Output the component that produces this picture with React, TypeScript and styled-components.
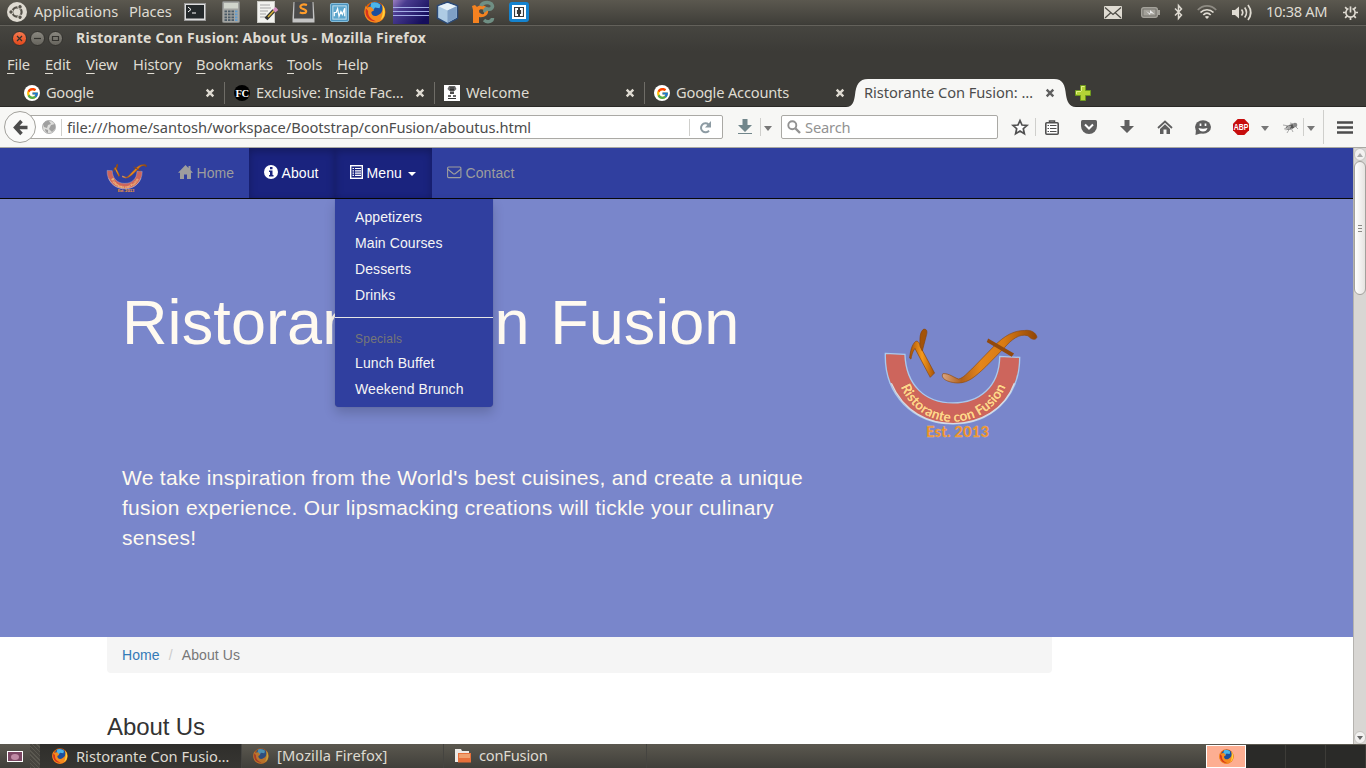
import React from "react";
import styled, { createGlobalStyle, css } from "styled-components";
import { FcGoogle } from "react-icons/fc";

const UI = `"Noto Sans", "Open Sans", sans-serif`;
const WEB = `"Liberation Sans", Arial, sans-serif`;

const Global = createGlobalStyle`
  * { box-sizing: border-box; }
  html, body { margin: 0; padding: 0; overflow: hidden; }
  svg { display: block; flex: none; overflow: visible; }
`;

const Screen = styled.div`
  width: 1366px;
  height: 768px;
  display: flex;
  flex-direction: column;
  overflow: hidden;
  background: #3c3b37;
  font-family: ${UI};
  font-size: 14.67px;
  color: #dfdbd2;
`;

const Label = styled.span<{ $ls?: number; $w?: number; $muted?: boolean }>`
  white-space: pre;
  flex: none;
  padding-bottom: 2px;
  letter-spacing: ${(p) => p.$ls ?? 0}px;
  ${(p) => p.$w && css`width: ${p.$w}px;`}
  ${(p) => p.$muted && css`color: #929292;`}
`;

const Slot = styled.div<{ $w: number }>`
  width: ${(p) => p.$w}px;
  flex: none;
  display: flex;
  align-items: center;
  justify-content: center;
`;

const Spacer = styled.div`
  flex: 1;
`;

/* ---------- desktop panel ---------- */
const Panel = styled.div`
  height: 26px;
  flex: none;
  display: flex;
  align-items: center;
  padding-bottom: 2px;
  background: linear-gradient(#5b584f, #3f3e39 24px, #3a3935 25px, #63615b 25px);
`;

/* ---------- window chrome ---------- */
const TitleBar = styled.div`
  height: 25px;
  flex: none;
  display: flex;
  align-items: center;
  padding-left: 12px;
  gap: 3px;
  background: linear-gradient(#464540, #3c3b37);
  font-weight: bold;
`;

const Title = styled.span`
  margin-left: 10px;
  padding-bottom: 2px;
  white-space: pre;
  font-size: 14px;
  letter-spacing: 0.255px;
`;

const WindowButton = styled.div<{ $close?: boolean }>`
  width: 15px;
  height: 15px;
  border-radius: 50%;
  border: 1px solid #33322e;
  background: ${(p) => (p.$close ? "linear-gradient(#f6794f,#e2481b)" : "linear-gradient(#8a8880,#66645d)")};
`;

const MenuBar = styled.div`
  height: 28px;
  flex: none;
  display: flex;
  align-items: center;
  padding-left: 7px;
  u {
    text-underline-offset: 3px;
    text-decoration-thickness: 1px;
    text-decoration-skip-ink: none;
  }
`;

const TabStrip = styled.div`
  height: 28px;
  flex: none;
  display: flex;
  padding-left: 14px;
  border-bottom: 1px solid #2a2926;
`;

const Tab = styled.div<{ $last?: boolean }>`
  width: 210px;
  flex: none;
  height: 28px;
  display: flex;
  align-items: center;
  padding-left: 10px;
  gap: 6px;
  &::after {
    content: "";
    flex: none;
    width: 1px;
    height: 22px;
    margin-left: 4px;
    background: ${(p) => (p.$last ? "transparent" : "#6f6d67")};
  }
`;

const TabText = styled.span<{ $ls?: number }>`
  width: 154px;
  flex: none;
  padding-bottom: 2px;
  white-space: pre;
  letter-spacing: ${(p) => p.$ls ?? -0.12}px;
`;

const Favicon = styled.div<{ $bg: string; $round?: boolean }>`
  width: 16px;
  height: 16px;
  flex: none;
  display: flex;
  align-items: center;
  justify-content: center;
  border-radius: ${(p) => (p.$round ? "50%" : "0")};
  background: ${(p) => p.$bg};
  color: #fff;
  font: bold 10.5px "Liberation Serif", serif;
  letter-spacing: -0.5px;
`;

const ActiveTab = styled.div`
  width: 214px;
  height: 28px;
  flex: none;
  display: flex;
  align-items: center;
  padding-left: 10px;
  color: #4c4c4c;
  position: relative;
  z-index: 1;
`;

const TabShape = styled.svg`
  position: absolute;
  left: -8px;
  top: 0;
  z-index: -1;
`;

const Toolbar = styled.div`
  height: 41px;
  flex: none;
  display: flex;
  align-items: center;
  background: #f7f7f5;
  border-bottom: 1px solid #a9a8a2;
  color: #4c4c4c;
`;

const BackButton = styled.div`
  width: 32px;
  height: 32px;
  margin-left: 4px;
  flex: none;
  border: 1px solid #a2a19c;
  border-radius: 50%;
  background: #fafaf9;
  display: flex;
  align-items: center;
  justify-content: center;
  position: relative;
  z-index: 1;
`;

const Field = styled.div<{ $w: number; $url?: boolean }>`
  width: ${(p) => p.$w}px;
  height: 24px;
  flex: none;
  display: flex;
  align-items: center;
  background: #fff;
  border: 1px solid #aaa9a5;
  border-radius: 2px;
  ${(p) => p.$url && css`
    margin-left: -8px;
    padding-left: 7px;
  `}
  ${Label} { padding-bottom: 0; }
`;

const Rule = styled.div<{ $h?: number }>`
  width: 1px;
  height: ${(p) => p.$h ?? 17}px;
  flex: none;
  background: #cfcfcc;
`;

const Caret = styled.div`
  border: 4px solid transparent;
  border-top: 5px solid #777;
  border-bottom: 0;
  margin-top: 2px;
`;

/* ---------- web page ---------- */
const Viewport = styled.div`
  flex: 1;
  min-height: 0;
  display: flex;
`;

const Page = styled.div`
  width: 1353px;
  flex: none;
  overflow: hidden;
  background: #fff;
  font-family: ${WEB};
  font-size: 14px;
  line-height: 20px;
  letter-spacing: 0.1px;
  color: #333;
`;

const Navbar = styled.nav`
  height: 51px;
  display: flex;
  padding-left: 107px;
  background: #303f9f;
  border-bottom: 1px solid #080808;
`;

const Brand = styled.div`
  width: 56px;
  padding: 15px 0 0 0;
`;

const NavItem = styled.div<{ $w: number; $active?: boolean }>`
  width: ${(p) => p.$w}px;
  height: 50px;
  padding: 15px 0 0 15px;
  display: flex;
  gap: 3.5px;
  position: relative;
  color: ${(p) => (p.$active ? "#fff" : "#9d9d9d")};
  ${(p) => p.$active && css`
    background: #1a237e;
    box-shadow: inset 0 3px 9px rgba(0, 0, 0, 0.25);
  `}
  > svg {
    margin-top: 2px;
  }
`;

const NavCaret = styled.div`
  margin: 9px 0 0 3px;
  height: 4px;
  border: 4px solid transparent;
  border-top-color: #fff;
  border-bottom: 0;
`;

const Dropdown = styled.div`
  position: absolute;
  left: 0;
  top: 51px;
  width: 158px;
  padding: 5px 0;
  background: #303f9f;
  border-radius: 0 0 4px 4px;
  box-shadow: 0 6px 12px rgba(0, 0, 0, 0.175), 0 0 1px rgba(0, 0, 0, 0.3);
  z-index: 2;
`;

const DropItem = styled.div`
  height: 26px;
  padding: 3px 20px;
  color: #f5f5f5;
  white-space: pre;
`;

const DropHeader = styled.div`
  height: 23px;
  padding: 4px 20px 2px;
  font-size: 12px;
  line-height: 17px;
  letter-spacing: 0.25px;
  color: #777;
`;

const DropDivider = styled.div`
  height: 1px;
  margin: 9px 0;
  background: #e5e5e5;
`;

const Hero = styled.header`
  height: 438px;
  display: flex;
  padding-left: 122px;
  background: #7986cb;
  color: floralwhite;
`;

const HeroText = styled.div`
  width: 763px;
  padding-top: 88px;
`;

const HeroTitle = styled.h1`
  margin: 0;
  font-size: 63px;
  line-height: 70px;
  font-weight: 400;
  white-space: pre;
`;

const TitleWord = styled.span<{ $ls: number; $gap: number }>`
  letter-spacing: ${(p) => p.$ls}px;
  word-spacing: ${(p) => p.$gap}px;
`;

const Lead = styled.p`
  margin: 106px 0 0;
  font-size: 21px;
  line-height: 30px;
  white-space: pre;
  letter-spacing: 0.29px;
`;

const HeroLogo = styled.div`
  padding-top: 126px;
`;

const Breadcrumb = styled.div`
  width: 945px;
  height: 36px;
  margin-left: 107px;
  padding: 8px 15px;
  display: flex;
  background: #f5f5f5;
  border-radius: 0 0 4px 4px;
  color: #777;
  a { color: #337ab7; }
  i { font-style: normal; color: #ccc; padding: 0 9px; }
`;

const SectionTitle = styled.h3`
  margin: 41px 0 0 107px;
  font-size: 24px;
  line-height: 26px;
  font-weight: 400;
  letter-spacing: -0.1px;
`;

const Scrollbar = styled.div`
  width: 13px;
  display: flex;
  flex-direction: column;
  align-items: center;
  justify-content: space-between;
  background: #d8d6d3;
  border-left: 1px solid #b5b3af;
`;

const ScrollEnd = styled.div`
  width: 12px;
  height: 13px;
  border: 1px solid #c4c2be;
  border-radius: 6px;
  background: #f2f1f0;
  display: flex;
  align-items: center;
  justify-content: center;
`;

const Thumb = styled.div`
  width: 12px;
  height: 134px;
  border: 1px solid #a3a19d;
  border-radius: 6px;
  background: linear-gradient(90deg, #fff, #e6e4e1);
  display: flex;
  flex-direction: column;
  align-items: center;
  justify-content: center;
  gap: 2px;
`;

const Grip = styled.div`
  width: 4px;
  height: 1px;
  background: #8c8a86;
`;

/* ---------- task bar ---------- */
const TaskBar = styled.div`
  height: 24px;
  flex: none;
  display: flex;
  align-items: center;
  background: linear-gradient(#5b584f, #403f3a);
`;

const Task = styled.div<{ $w: number; $active?: boolean; $dim?: boolean }>`
  width: ${(p) => p.$w}px;
  height: 24px;
  flex: none;
  display: flex;
  align-items: center;
  gap: 8px;
  padding-left: ${(p) => (p.$active ? 12 : 11)}px;
  border-right: 1px solid #454440;
  background: ${(p) => (p.$active ? "linear-gradient(#2f2e2b,#373632)" : "transparent")};
  svg { opacity: ${(p) => (p.$dim ? 0.65 : 1)}; }
  ${Label} { padding-bottom: ${(p) => (p.$active ? 0 : 2)}px; }
`;

const Handle = styled.div`
  width: 10px;
  height: 24px;
  background: repeating-linear-gradient(45deg, #5a5850 0 1px, #47453f 1px 3px);
`;

const Workspace = styled.div<{ $on?: boolean }>`
  width: 40px;
  height: 23px;
  display: flex;
  align-items: center;
  justify-content: center;
  border: solid ${(p) => (p.$on ? "#fff" : "#3d3c38")};
  border-width: ${(p) => (p.$on ? "1px" : "0 1px 0 0")};
  background: ${(p) => (p.$on ? "#fdae92" : "#2a2a28")};
`;

/* ---------- drawings ---------- */
const Firefox = ({ size = 22 }: { size?: number }) => (
  <svg width={size} height={size} viewBox="0 0 24 24">
    <circle cx="12" cy="12" r="11.5" fill="#e66000" />
    <circle cx="12.5" cy="10" r="8.8" fill="#1c4f9c" />
    <path d="M8 2Q13 0 18 4L17 8L12 7L10 10L7 6Z" fill="#4cb5e8" />
    <path d="M20 4C26 12 23 23 12 23.5C2 23.5-2 14 2 5L3.5 8C5 6 7 6 8.500 7L11 10L8 12C8 17 13 17.500 16 15C20 13 21 9 20 4Z" fill="#f58a1f" />
    <path d="M20 4C24 9 24 17 18 21C21 15 21 10 20 4Z" fill="#ffd43a" />
    <path d="M2 8C0 17 6 23 13 22C7 20 4 16 4.500 11Z" fill="#d7341c" />
  </svg>
);

const ConFusionLogo = ({ w, h }: { w: number; h: number }) => (
  <svg width={w} height={h} viewBox="45 30 460 345">
    <defs>
      <path id="ribbonCurve" d="M81 156A169 165 0 0 0 419 156" />
      <linearGradient id="stick" x1="0" x2="1">
        <stop offset="0" stopColor="#a85206" />
        <stop offset=".5" stopColor="#f59a1d" />
        <stop offset="1" stopColor="#a85206" />
      </linearGradient>
      <linearGradient id="swoosh" x1="0" x2="1">
        <stop offset="0" stopColor="#d9a582" />
        <stop offset=".2" stopColor="#b0601c" />
        <stop offset=".4" stopColor="#e5861a" />
        <stop offset=".65" stopColor="#d97b14" />
        <stop offset="1" stopColor="#8f4406" />
      </linearGradient>
    </defs>
    <path d="M46 115L105 118C108 210 165 264 249 264C330 264 388 215 390 124L450 127C450 250 360 327 250 327C130 327 42 240 46 115Z" fill="#cd655c" stroke="#a9c9ed" strokeWidth="4" />
    <path d="M64 205C100 290 175 326 250 326C330 326 405 285 434 205" fill="none" stroke="#d8dbe4" strokeWidth="4" />
    <text fontFamily="Lato, sans-serif" fontWeight="900" fontSize="42" fill="#ffd58a" stroke="#9d3d31" strokeWidth="1" paintOrder="stroke">
      <textPath href="#ribbonCurve" startOffset="50%" textAnchor="middle" textLength="404" lengthAdjust="spacingAndGlyphs">Ristorante con Fusion</textPath>
    </text>
    <path d="M119 129C121 108 126 88 137 79C145 76 149 84 151 94L194 174L181 187L135 100C127 110 125 123 123 132Z" fill="url(#stick)" stroke="#8a4407" strokeWidth="2" />
    <path d="M151 94C149 72 149 49 162 42C175 42 171 56 168 66L157 108Z" fill="#a35309" stroke="#8a4407" strokeWidth="2" />
    <path d="M219 176C237 174 252 188 266 192C280 190 294 172 306 162L374 92C404 62 432 46 465 46C484 43 500 54 502 66C498 77 485 74 475 62C449 54 425 74 404 98L348 155C315 186 296 203 266 204C241 204 210 193 219 176Z" fill="url(#swoosh)" stroke="#8f4a0c" strokeWidth="2" />
    <path d="M355 70L433 115L426 125L351 81Z" fill="#92490c" />
    <text x="263" y="366" textAnchor="middle" fontFamily="Lato, sans-serif" fontWeight="900" fontSize="44" textLength="190" fill="#ee8f1f" stroke="#e7bd98" strokeWidth=".8">Est. 2013</text>
  </svg>
);

const TabClose = ({ color = "#dfdbd2" }: { color?: string }) => (
  <svg width="8" height="8" viewBox="0 0 8 8">
    <path d="M.7 .7L7.300 7.300M7.300 .7L.7 7.300" stroke={color} strokeWidth="2.400" />
  </svg>
);

const UbuntuMark = () => (
  <svg width="20" height="20" viewBox="0 0 20 20">
    <circle cx="10" cy="10" r="10" fill="#dfdbd2" />
    <circle cx="10" cy="10" r="4.6" fill="none" stroke="#55524a" strokeWidth="2.2" />
    {[60, 180, 300].map((a) => (
      <g key={a} transform={`rotate(${a} 10 10)`}>
        <circle cx="16" cy="10" r="2.5" fill="#dfdbd2" />
        <circle cx="16" cy="10" r="1.7" fill="#55524a" />
      </g>
    ))}
  </svg>
);

const launchers = [
  <svg key="term" width="22" height="18" viewBox="0 0 22 18">
    <rect x=".5" y=".5" width="21" height="17" fill="#ddd" stroke="#999" />
    <rect x="2" y="2" width="18" height="13.500" fill="#24292b" />
    <path d="M4 4L7 6.500L4 9M8 10H12" stroke="#fff" fill="none" />
  </svg>,
  <svg key="calc" width="18" height="22" viewBox="0 0 18 22">
    <rect x=".5" y=".5" width="17" height="21" rx="1" fill="#a3a4a1" stroke="#858683" />
    <rect x="2" y="2" width="14" height="5.500" fill="#d0d4cb" />
    {[9.5, 12.5, 15.5, 18.2].map((y) => [2.5, 6, 9.5, 13].map((x) => (
      <rect key={`${x}-${y}`} x={x} y={y} width="2.500" height="1.800" fill={x === 13 ? "#5f9bd0" : "#4b5a66"} />
    )))}
  </svg>,
  <svg key="edit" width="21" height="22" viewBox="0 0 21 22">
    <rect x=".5" y=".5" width="17" height="21" fill="#f2f2ef" stroke="#c9c9c4" />
    <path d="M3 4H13M3 7H14M3 10H11M3 13H9M3 16H13" stroke="#a5a5a5" />
    <path d="M9 18L17 9.500" stroke="#333" strokeWidth="4" />
    <path d="M11 16L17 9.500" stroke="#d9b43a" strokeWidth="1.500" />
    <path d="M17 10L20 7.500" stroke="#d68fc0" strokeWidth="4" />
  </svg>,
  <svg key="sublime" width="23" height="21" viewBox="0 0 23 21">
    <path d="M1.500 0H21.500L22.500 16V20.500H.5V16Z" fill="#c4c4c4" />
    <path d="M2.500 0H20.500L21 16.500H2Z" fill="#4b4b4b" />
    <path d="M15 3C11 1.500 8 3 8.500 5.200C9 7.300 14.200 6.800 14.200 9.300C14 11.500 10 11.500 7.800 10.300" fill="none" stroke="#ff9c2b" strokeWidth="2.100" />
  </svg>,
  <svg key="monitor" width="19" height="19" viewBox="0 0 20 20">
    <rect x=".5" y=".5" width="19" height="19" rx="1.500" fill="#4b94bf" stroke="#8cc3e0" />
    <rect x="3" y="3" width="14" height="14" fill="#5ca6cd" stroke="#c8e3f0" />
    <path d="M4.500 14V10H6.500L8 6L9.500 14L11.500 9L13 12L15.500 5.500V14" fill="none" stroke="#fff" strokeWidth="1.300" />
  </svg>,
  <Firefox key="ff" size={22} />,
  <svg key="eclipse" width="36" height="24" viewBox="0 0 36 24">
    <defs>
      <linearGradient id="ecl" x1="0" y1="0" x2="1" y2=".6">
        <stop offset="0" stopColor="#9b7fc0" />
        <stop offset=".3" stopColor="#4a3c90" />
        <stop offset="1" stopColor="#150e5c" />
      </linearGradient>
    </defs>
    <rect width="36" height="24" fill="url(#ecl)" />
    <path d="M0 7.500H36M0 11.500H36M0 15.500H36" stroke="#a3aee6" />
  </svg>,
  <svg key="cube" width="23" height="23" viewBox="0 0 23 24">
    <path d="M11.500 1L22 5V18L11.500 23.500L1 18V5Z" fill="#aecbe4" stroke="#2c4a77" strokeWidth="1.500" />
    <path d="M11.500 2L21 5.500L11.500 10L2 5.500Z" fill="#e9f3f8" />
    <path d="M11.500 10L21 5.500V17.500L11.500 22.500Z" fill="#7fa0c6" />
  </svg>,
  <svg key="python" width="24" height="23" viewBox="0 0 24 23">
    <path d="M1 5L4 4L6 6C9 3 16 4 17 9C18 14 13 17 8 16V22H2V9Z" fill="#f58220" />
    <path d="M8 10C8 8 11 7.500 13 9V13C11 13.500 8 12.500 8 10Z" fill="#4a4842" />
    <path d="M10 5C11 1.500 17 .5 20.500 3C23 6 20 9 16.500 8C14.500 7.500 13 9 14.500 11" stroke="#6f8f84" strokeWidth="3.500" fill="none" />
    <path d="M13 19C17 22.500 21.500 20 21.500 17" stroke="#6f8f84" strokeWidth="3.500" fill="none" />
  </svg>,
  <svg key="brackets" width="20" height="20" viewBox="0 0 20 20">
    <rect width="20" height="20" rx="3" fill="#1583cf" />
    <rect x="4" y="4" width="12" height="12" fill="#3a3a3a" stroke="#fff" strokeWidth="2" />
    <path d="M9 7H7V13H9M11 7H13V13H11" fill="none" stroke="#fff" strokeWidth="1.800" />
  </svg>,
];

const MailIcon = () => (
  <svg width="18" height="13" viewBox="0 0 18 13">
    <rect width="18" height="13" rx="1" fill="#dfdbd2" />
    <path d="M1 1.500L9 8.500L17 1.500M1 12L6.500 7M17 12L11.500 7" fill="none" stroke="#4b4943" strokeWidth="1.200" />
  </svg>
);
const BatteryIcon = () => (
  <svg width="19" height="11" viewBox="0 0 19 11">
    <rect x=".7" y=".7" width="15.600" height="9.600" rx="2" fill="#77756e" stroke="#a4a29a" strokeWidth="1.400" />
    <rect x="2.500" y="2.500" width="12" height="6" fill="#a4a29a" />
    <rect x="17" y="3" width="2" height="5" fill="#a4a29a" />
    <path d="M5 4L9 6.500V3L13.500 7L9.500 6L9 8Z" fill="#eee" />
  </svg>
);
const BluetoothIcon = () => (
  <svg width="9" height="16" viewBox="0 0 9 16">
    <path d="M1 4.500L7.500 11L4.500 14.500V1.500L7.500 5L1 11.500" fill="none" stroke="#dfdbd2" strokeWidth="1.500" />
  </svg>
);
const WifiIcon = () => (
  <svg width="20" height="14" viewBox="0 0 20 14" fill="none" strokeWidth="1.700">
    <path d="M.8 5C6 -.5 14 -.5 19.200 5" stroke="#8e8b83" />
    <path d="M3.500 7.500C7 3.800 13 3.800 16.500 7.500M6.300 10C8.500 7.500 11.500 7.500 13.700 10" stroke="#dfdbd2" />
    <path d="M10 14L7.800 11.800Q10 10 12.200 11.800Z" fill="#dfdbd2" />
  </svg>
);
const SpeakerIcon = () => (
  <svg width="20" height="17" viewBox="0 0 20 17" fill="none" stroke="#dfdbd2" strokeWidth="1.700">
    <path d="M0 6H3L7 2.500V14.500L3 11H0Z" fill="#dfdbd2" stroke="none" />
    <path d="M9.500 5.500Q12 8.500 9.500 11.500M12.700 3.500Q16.300 8.500 12.700 13.500M16 1Q21.500 8.500 16 16" />
  </svg>
);
const PowerGear = () => (
  <svg width="15" height="15" viewBox="0 0 16 16" fill="none" stroke="#dfdbd2">
    <path d="M5.800 3.700A4.900 4.900 0 1 0 10.200 3.700" strokeWidth="1.700" />
    <path d="M8 1.500V8" strokeWidth="1.800" />
    <path d="M0 8H3M13 8H16M2.300 2.300L4.300 4.300M13.700 2.300L11.700 4.300M2.300 13.700L4.300 11.700M13.700 13.700L11.700 11.700M8 13V16" strokeWidth="1.800" />
  </svg>
);

const BackArrow = () => (
  <svg width="15" height="15" viewBox="0 0 15 15">
    <path d="M8.500 1L2.500 7.500L8.500 14M2.500 7.500H14.500" fill="none" stroke="#4c4c4c" strokeWidth="3.500" />
  </svg>
);
const Globe = () => (
  <svg width="14" height="14" viewBox="0 0 14 14">
    <circle cx="7" cy="7" r="6.500" fill="#dededc" stroke="#b4b4b4" />
    <path d="M1 4Q4 0 7 1L9 4L6 5L5 8L2 7ZM9 5L13 4L13 9L10 12L7 9ZM3 9L6 10L6 13Q3 12 3 9Z" fill="#a0a0a0" />
  </svg>
);
const Reload = () => (
  <svg width="13" height="13" viewBox="0 0 13 13">
    <path d="M9.500 3.500A4.500 4.500 0 1 0 10 9.700" fill="none" stroke="#8d9ba3" strokeWidth="2" />
    <path d="M12 0V6.500H6Z" fill="#8d9ba3" />
  </svg>
);
const DownArrow = ({ color = "#5f5f5f", line = false }: { color?: string; line?: boolean }) => (
  <svg width="14" height={line ? 16 : 14} viewBox={line ? "0 0 14 16" : "0 0 14 14"}>
    <path d="M4.500 0H9.500V6H14L7 13L0 6H4.500Z" fill={color} />
    {line && <path d="M0 14.500H14" stroke={color} />}
  </svg>
);
const SearchIcon = () => (
  <svg width="14" height="14" viewBox="0 0 14 14" fill="none" stroke="#929292">
    <circle cx="5.300" cy="5.300" r="4" strokeWidth="1.900" />
    <path d="M8.500 8.500L13 13" strokeWidth="2.400" />
  </svg>
);
const StarIcon = () => (
  <svg width="16" height="16" viewBox="0 0 16 16">
    <path d="M8 1.500L10 6L15 6.500L11.300 9.700L12.400 14.700L8 12L3.600 14.700L4.700 9.700L1 6.500L6 6Z" fill="#fff" stroke="#505050" strokeWidth="1.700" />
  </svg>
);
const ListIcon = () => (
  <svg width="14" height="15" viewBox="0 0 14 15">
    <path d="M4.500 2.500V1H9.500V2.500" fill="none" stroke="#505050" strokeWidth="1.500" />
    <rect x=".8" y="2.800" width="12.400" height="11.400" rx="1" fill="#fff" stroke="#505050" strokeWidth="1.600" />
    <path d="M2.500 5.500H4M5 5.500H11.500M2.500 8.500H4M5 8.500H11.500M2.500 11.500H4M5 11.500H11.500" stroke="#505050" strokeWidth="1" />
  </svg>
);
const PocketIcon = () => (
  <svg width="16" height="14" viewBox="0 0 16 14">
    <path d="M0 1.500Q0 0 1.500 0H14.500Q16 0 16 1.500V6A8 8 0 0 1 0 6Z" fill="#5f5f5f" />
    <path d="M4 4.500L8 8.500L12 4.500" stroke="#fff" fill="none" strokeWidth="2" />
  </svg>
);
const HomeIcon = () => (
  <svg width="16" height="14" viewBox="0 0 16 14">
    <path d="M1 8L8 1.500L15 8" fill="none" stroke="#5f5f5f" strokeWidth="1.800" />
    <path d="M3 9L8 4.300L13 9V14H9.500V9.500H6.500V14H3Z" fill="#5f5f5f" />
  </svg>
);
const ChatFace = () => (
  <svg width="16" height="15" viewBox="0 0 16 15">
    <ellipse cx="8" cy="7" rx="8" ry="6.800" fill="#5f5f5f" />
    <path d="M1 9L.5 15L7 13Z" fill="#5f5f5f" />
    <path d="M5.500 3.500V6M10.500 3.500V6" stroke="#fff" strokeWidth="1.700" />
    <path d="M3.500 8Q8 9.500 12.500 8Q11.500 11.500 8 11.500Q4.500 11.500 3.500 8Z" fill="#fff" />
  </svg>
);
const AdBlock = () => (
  <svg width="16" height="16" viewBox="0 0 16 16">
    <path d="M4.700 0H11.300L16 4.700V11.300L11.300 16H4.700L0 11.300V4.700Z" fill="#c70d0d" />
    <text x="8" y="11" textAnchor="middle" fill="#fff" fontFamily="Liberation Sans" fontWeight="bold" fontSize="8.500" textLength="14.500" lengthAdjust="spacingAndGlyphs">ABP</text>
  </svg>
);
const FlyIcon = () => (
  <svg width="16" height="13" viewBox="0 0 16 13">
    <ellipse cx="7.500" cy="6" rx="5" ry="2.300" fill="#555" transform="rotate(-20 7.500 6)" />
    <circle cx="12" cy="4" r="2.300" fill="#888" />
    <path d="M0 4L6 5M1 8L5 7M4 12L7 7M10 11L8 7M7 2L11 3M13 6L15 8" stroke="#aaa" />
    <ellipse cx="5" cy="7" rx="3.500" ry="1.300" fill="#bbb" opacity=".8" transform="rotate(-35 5 7)" />
  </svg>
);

const windowGlyphs = ["M4 4L9 9M9 4L4 9", "M3 6.500H10", "M3.500 4.500H9.500V8.500H3.500Z"];

const menus: { w: number; t: React.ReactNode; k: string }[] = [
  { k: "file", w: 38, t: <><u>F</u>ile</> },
  { k: "edit", w: 41, t: <><u>E</u>dit</> },
  { k: "view", w: 47, t: <><u>V</u>iew</> },
  { k: "hist", w: 63, t: <>Hi<u>s</u>tory</> },
  { k: "book", w: 91, t: <><u>B</u>ookmarks</> },
  { k: "tool", w: 50, t: <><u>T</u>ools</> },
  { k: "help", w: 50, t: <><u>H</u>elp</> },
];

const GoogleIcon = () => (
  <Favicon $bg="#fff" $round>
    <FcGoogle size={13} />
  </Favicon>
);

export default function App() {
  return (
    <Screen>
      <Global />
      <Panel>
        <Slot $w={34}><UbuntuMark /></Slot>
        <Label $w={95}>Applications</Label>
        <Label $w={48} $ls={-0.1}>Places</Label>
        {launchers.map((icon, i) => <Slot key={i} $w={36}>{icon}</Slot>)}
        <Spacer />
        <Slot $w={36}><MailIcon /></Slot>
        <Slot $w={38}><BatteryIcon /></Slot>
        <Slot $w={18}><BluetoothIcon /></Slot>
        <Slot $w={40}><WifiIcon /></Slot>
        <Slot $w={29}><SpeakerIcon /></Slot>
        <Slot $w={10} />
        <Label $w={68} $ls={-0.35}>10:38 AM</Label>
        <Slot $w={32}><PowerGear /></Slot>
      </Panel>

      <TitleBar>
        {windowGlyphs.map((d, i) => (
          <WindowButton key={d} $close={i === 0}>
            <svg width="13" height="13" viewBox="0 0 13 13"><path d={d} fill="none" stroke="#33322e" strokeWidth="1.200" /></svg>
          </WindowButton>
        ))}
        <Title>Ristorante Con Fusion: About Us - Mozilla Firefox</Title>
      </TitleBar>

      <MenuBar>
        {menus.map((m) => <Label key={m.k} $w={m.w} $ls={-0.12}>{m.t}</Label>)}
      </MenuBar>

      <TabStrip>
        <Tab><GoogleIcon /><TabText $ls={-0.3}>Google</TabText><TabClose /></Tab>
        <Tab><Favicon $bg="#000" $round>FC</Favicon><TabText>Exclusive: Inside Fac…</TabText><TabClose /></Tab>
        <Tab>
          <Favicon $bg="#fff">
            <svg width="10" height="14" viewBox="0 0 10 14">
              <path d="M2 0H8L9.500 3L7.500 5H2.500L.5 3ZM3 6H7V8H3ZM1 9H4V11H1ZM6 9H9V11H6Z" fill="#666" />
              <path d="M1 12.500H9M4 1V8M6 1V8M3 3.500H7" stroke="#333" />
            </svg>
          </Favicon>
          <TabText $ls={0}>Welcome</TabText><TabClose />
        </Tab>
        <Tab $last><GoogleIcon /><TabText $ls={-0.2}>Google Accounts</TabText><TabClose /></Tab>
        <ActiveTab>
          <TabShape width="230" height="29" viewBox="0 0 230 29">
            <path d="M0 28C7 28 8 22 9 16C10 6 13 0 22 0H208C217 0 219 6 220 16C221 22 223 28 230 28V29H0Z" fill="#f7f7f5" />
          </TabShape>
          <Label $w={182} $ls={-0.05}>Ristorante Con Fusion: …</Label>
          <TabClose color="#606060" />
        </ActiveTab>
        <Slot $w={30}>
          <svg width="16" height="16" viewBox="0 0 16 16">
            <path d="M5.500 .5H10.500V5.500H15.500V10.500H10.500V15.500H5.500V10.500H.5V5.500H5.500Z" fill="#b4d336" stroke="#6f9a1e" />
            <path d="M6.500 6V1.500H9.500M1.500 9V6.500H6" fill="none" stroke="#e3f08a" />
          </svg>
        </Slot>
      </TabStrip>

      <Toolbar>
        <BackButton><BackArrow /></BackButton>
        <Field $w={695} $url>
          <Slot $w={25}><Globe /></Slot>
          <Rule />
          <Slot $w={5} />
          <Label $w={622} $ls={-0.05}>file:///home/santosh/workspace/Bootstrap/conFusion/aboutus.html</Label>
          <Rule />
          <Slot $w={31}><Reload /></Slot>
        </Field>
        <Slot $w={7} />
        <Slot $w={30}><DownArrow color="#71868b" line /></Slot>
        <Rule $h={18} />
        <Slot $w={14}><Caret /></Slot>
        <Slot $w={6} />
        <Field $w={217}>
          <Slot $w={23}><SearchIcon /></Slot>
          <Label $muted $ls={-0.15}>Search</Label>
        </Field>
        <Slot $w={7} />
        <Slot $w={30}><StarIcon /></Slot>
        <Rule $h={18} />
        <Slot $w={31}><ListIcon /></Slot>
        <Slot $w={3} />
        <Slot $w={38}><PocketIcon /></Slot>
        <Slot $w={38}><DownArrow /></Slot>
        <Slot $w={38}><HomeIcon /></Slot>
        <Slot $w={38}><ChatFace /></Slot>
        <Slot $w={38}><AdBlock /></Slot>
        <Slot $w={10}><Caret /></Slot>
        <Slot $w={9} />
        <Slot $w={24}><FlyIcon /></Slot>
        <Rule $h={18} />
        <Slot $w={14}><Caret /></Slot>
        <Slot $w={5} />
        <Rule $h={34} />
        <Slot $w={42}>
          <svg width="16" height="13" viewBox="0 0 16 13"><path d="M0 1.500H16M0 6.500H16M0 11.500H16" stroke="#4c4c4c" strokeWidth="2.600" /></svg>
        </Slot>
      </Toolbar>

      <Viewport>
        <Page>
          <Navbar>
            <Brand><ConFusionLogo w={40} h={30} /></Brand>
            <NavItem $w={86}>
              <svg width="15" height="14" viewBox="0 0 15 14"><path d="M7.500 0L10.500 3V1H12.500V5L15 7.800H13V14H9V9.500H6V14H2V7.800H0Z" fill="#9d9d9d" /></svg>
              <span>Home</span>
            </NavItem>
            <NavItem $w={86} $active>
              <svg width="14" height="14" viewBox="0 0 14 14">
                <circle cx="7" cy="7" r="7" fill="#fff" />
                <path d="M6 2H8.500V4.200H6ZM5 5.500H8.500V10H9.500V11.500H5V10H6V7H5Z" fill="#1a237e" />
              </svg>
              <span>About</span>
            </NavItem>
            <NavItem $w={97} $active>
              <svg width="13" height="14" viewBox="0 0 13 14">
                <rect x=".7" y=".7" width="11.600" height="12.600" fill="none" stroke="#fff" strokeWidth="1.400" />
                <path d="M2.500 3.500H4M5 3.500H11M2.500 5.800H4M5 5.800H11M2.500 8.100H4M5 8.100H11M2.500 10.400H4M5 10.400H11" stroke="#fff" strokeWidth="1.200" />
              </svg>
              <span>Menu</span>
              <NavCaret />
              <Dropdown>
                {["Appetizers", "Main Courses", "Desserts", "Drinks"].map((t) => <DropItem key={t}>{t}</DropItem>)}
                <DropDivider />
                <DropHeader>Specials</DropHeader>
                {["Lunch Buffet", "Weekend Brunch"].map((t) => <DropItem key={t}>{t}</DropItem>)}
              </Dropdown>
            </NavItem>
            <NavItem $w={100}>
              <svg width="15" height="14" viewBox="0 0 15 14" fill="none" stroke="#9d9d9d" strokeWidth="1.100">
                <rect x=".6" y="2" width="13.300" height="10.600" rx="1" />
                <path d="M.6 4L6 8.500Q7.300 9.500 8.500 8.500L14 4" />
              </svg>
              <span>Contact</span>
            </NavItem>
          </Navbar>
          <Hero>
            <HeroText>
              <HeroTitle>
                <TitleWord $ls={0.1} $gap={-13}>{"Ristorante "}</TitleWord>
                <TitleWord $ls={-0.4} $gap={4}>{"Con "}</TitleWord>
                <TitleWord $ls={0} $gap={0}>Fusion</TitleWord>
              </HeroTitle>
              <Lead>{"We take inspiration from the World's best cuisines, and create a unique\nfusion experience. Our lipsmacking creations will tickle your culinary\nsenses!"}</Lead>
            </HeroText>
            <HeroLogo><ConFusionLogo w={153} h={115} /></HeroLogo>
          </Hero>
          <Breadcrumb><a>Home</a><i>/</i><span>About Us</span></Breadcrumb>
          <SectionTitle>About Us</SectionTitle>
        </Page>
        <Scrollbar>
          <div>
            <ScrollEnd><svg width="6" height="4" viewBox="0 0 6 4"><path d="M0 4L3 0L6 4Z" fill="#aaa" /></svg></ScrollEnd>
            <Thumb><Grip /><Grip /><Grip /></Thumb>
          </div>
          <ScrollEnd><svg width="6" height="4" viewBox="0 0 6 4"><path d="M0 0L3 4L6 0Z" fill="#666" /></svg></ScrollEnd>
        </Scrollbar>
      </Viewport>

      <TaskBar>
        <Slot $w={30}>
          <svg width="16" height="11" viewBox="0 0 16 11">
            <rect x=".5" y=".5" width="15" height="10" fill="#7c4763" stroke="#fff" />
            <ellipse cx="8" cy="6" rx="4" ry="3" fill="#c18ba5" />
          </svg>
        </Slot>
        <Handle />
        <Task $w={202} $active><Firefox size={16} /><Label>Ristorante Con Fusio…</Label></Task>
        <Task $w={202} $dim><Firefox size={16} /><Label $ls={0.1}>[Mozilla Firefox]</Label></Task>
        <Task $w={203}>
          <svg width="16" height="14" viewBox="0 0 16 14">
            <path d="M0 0H6L7 2H14V13H0Z" fill="#eeeae6" />
            <rect x="3" y="4" width="13" height="9.500" fill="#e8703b" />
            <rect x="4" y="5" width="11" height="4" fill="#f0a06e" />
          </svg>
          <Label $ls={-0.2}>conFusion</Label>
        </Task>
        <Spacer />
        <Workspace $on><Firefox size={15} /></Workspace>
        <Workspace /><Workspace /><Workspace />
      </TaskBar>
    </Screen>
  );
}
